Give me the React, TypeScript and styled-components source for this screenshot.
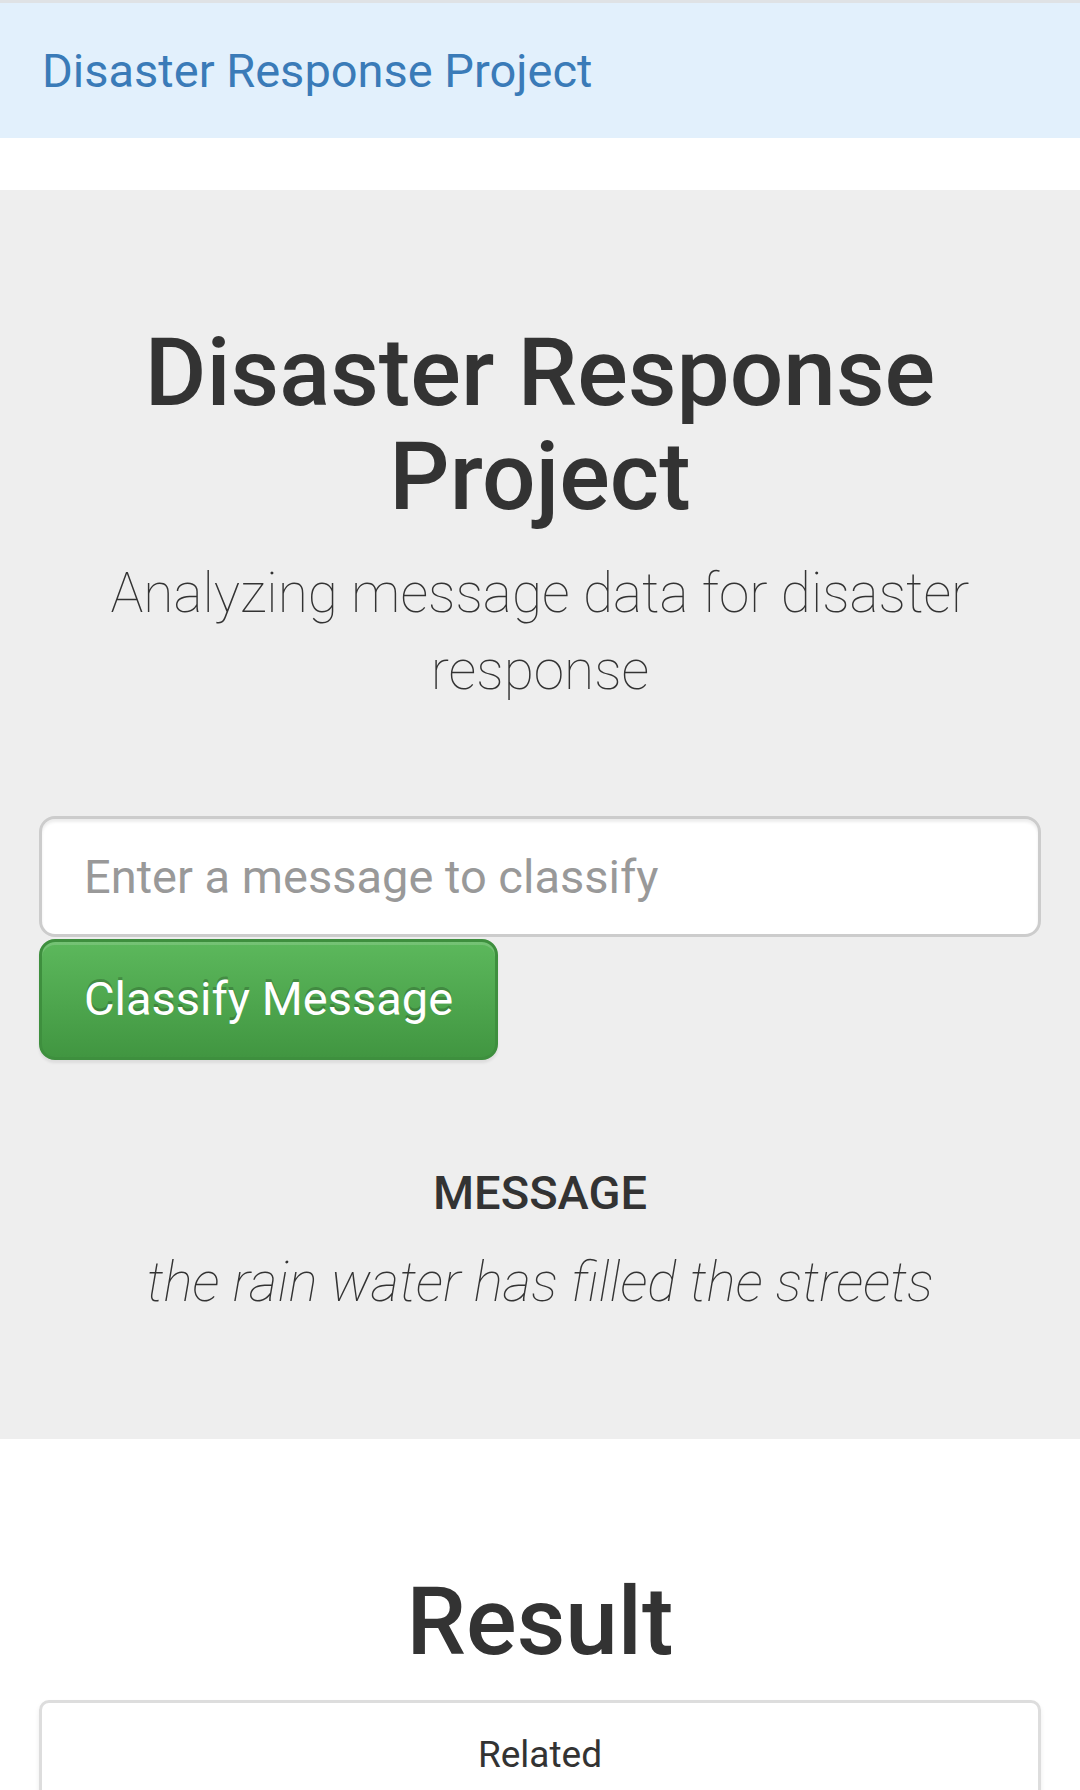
import styled, { createGlobalStyle } from "styled-components";

// sizes are bootstrap 3 values scaled by the device pixel ratio (2.625)

const GlobalStyle = createGlobalStyle`
  * {
    box-sizing: border-box;
  }
  body {
    margin: 0;
    background: #fff;
    color: #333;
    font-family: Roboto, "Noto Sans", "Liberation Sans", sans-serif;
  }
`;

const categories = ["Related"];

function App() {
  return (
    <>
      <GlobalStyle />
      <Navbar>
        <Brand href="#">Disaster Response Project</Brand>
      </Navbar>

      <Jumbotron>
        <Title>Disaster Response Project</Title>
        <Lead>Analyzing message data for disaster response</Lead>
        <Divider />

        <form onSubmit={(e) => e.preventDefault()}>
          <QueryInput type="text" name="query" placeholder="Enter a message to classify" />
          <ClassifyButton type="submit">Classify Message</ClassifyButton>
        </form>

        <Divider />
        <MessageLabel>MESSAGE</MessageLabel>
        <Lead>
          <i>the rain water has filled the streets</i>
        </Lead>
      </Jumbotron>

      <ResultContainer>
        <Title>Result</Title>
        <ResultList>
          {categories.map((c) => (
            <ResultItem key={c}>{c}</ResultItem>
          ))}
        </ResultList>
      </ResultContainer>
    </>
  );
}

export default App;

const Navbar = styled.nav`
  height: 138px;
  border-top: 3px solid #dfe2e5;
  background-color: #e2f0fc;
  display: flex;
  align-items: center;
  padding: 0 42px;
`;

const Brand = styled.a`
  font-size: 47px;
  line-height: 52px;
  color: #3a7bb8;
  text-decoration: none;
`;

const Jumbotron = styled.div`
  margin-top: 52px;
  margin-bottom: 79px;
  background-color: #eee;
  padding: 79px 39px;
  display: flow-root;
`;

const Title = styled.h1`
  margin: 52px 0 26px;
  font-size: 94.5px;
  font-weight: 500;
  line-height: 1.1;
  text-align: center;
  color: #333;
`;

const Lead = styled.p`
  margin: 0 0 39px;
  font-size: 55px;
  font-weight: 100;
  line-height: 1.4;
  text-align: center;
  color: #333;
`;

const Divider = styled.hr`
  margin: 52px 0;
  border: 0;
  border-top: 3px solid #eee;
`;

const QueryInput = styled.input`
  display: block;
  width: 100%;
  height: 121px;
  padding: 26px 42px;
  font-family: Roboto, "Noto Sans", sans-serif;
  font-size: 47px;
  color: #555;
  background: #fff;
  border: 3px solid #ccc;
  border-radius: 16px;
  box-shadow: inset 0 3px 3px rgba(0, 0, 0, 0.075);
  outline: none;

  &::placeholder {
    color: #999;
  }
`;

const ClassifyButton = styled.button`
  display: inline-block;
  margin-top: 2px;
  padding: 26px 42px;
  font-family: Roboto, "Noto Sans", sans-serif;
  font-size: 47px;
  line-height: 1.3333;
  color: #fff;
  text-shadow: 0 -3px 0 rgba(0, 0, 0, 0.2);
  background-image: linear-gradient(to bottom, #5cb85c 0, #419641 100%);
  border: 3px solid #3e8f3e;
  border-radius: 16px;
  box-shadow: inset 0 3px 0 rgba(255, 255, 255, 0.15), 0 3px 3px rgba(0, 0, 0, 0.075);
  cursor: pointer;
`;

const MessageLabel = styled.h4`
  margin: 26px 0;
  font-size: 47px;
  font-weight: 500;
  line-height: 1.1;
  text-align: center;
  color: #333;
`;

const ResultContainer = styled.div`
  padding: 0 39px;
  display: flow-root;
`;

const ResultList = styled.ul`
  margin: 0 0 52px;
  padding: 0;
  list-style: none;
  border-radius: 10px;
  box-shadow: 0 3px 5px rgba(0, 0, 0, 0.075);
`;

const ResultItem = styled.li`
  padding: 26px 39px;
  margin-bottom: -3px;
  font-size: 37px;
  line-height: 1.42857;
  text-align: center;
  color: #333;
  background: #fff;
  border: 3px solid #ddd;

  &:first-child {
    border-top-left-radius: 10px;
    border-top-right-radius: 10px;
  }

  &:last-child {
    margin-bottom: 0;
    border-bottom-left-radius: 10px;
    border-bottom-right-radius: 10px;
  }
`;
